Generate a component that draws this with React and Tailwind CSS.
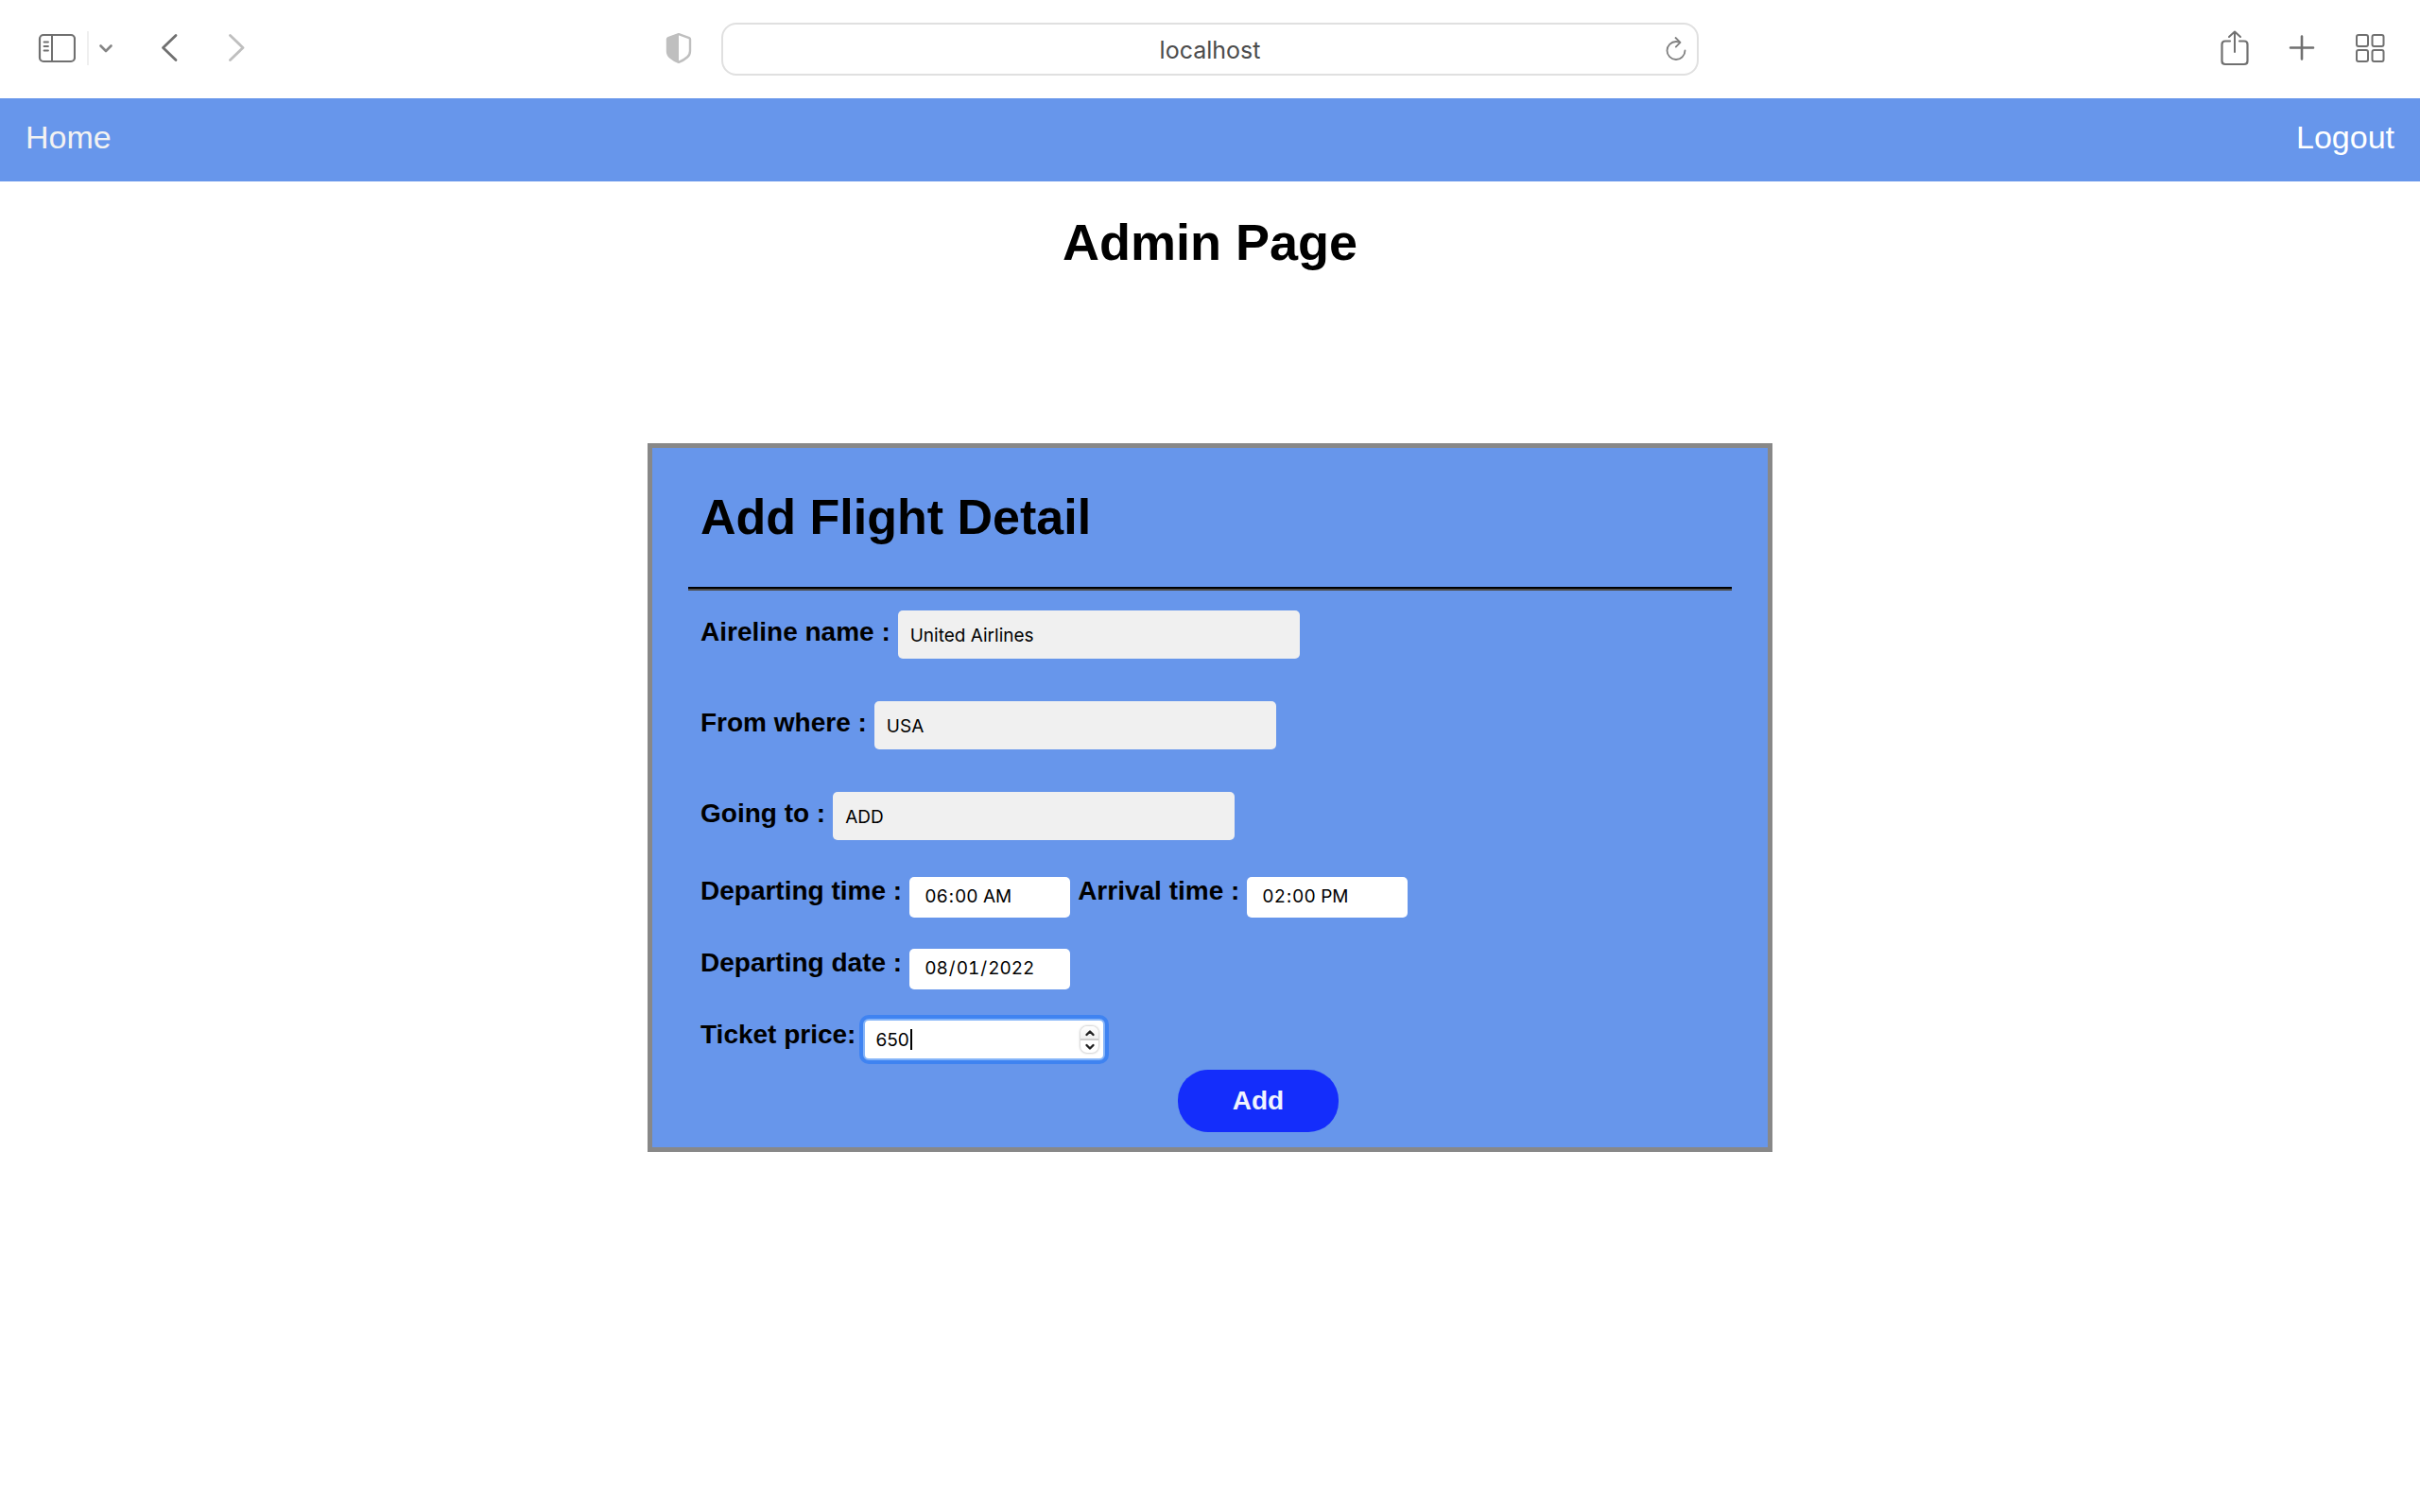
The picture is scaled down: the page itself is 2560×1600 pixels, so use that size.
import React from 'react';

function Toolbar() {
  return (
    <header className="grid h-[104px] grid-cols-[1fr_minmax(0,1034px)_1fr] items-center bg-white text-[#707070]">
      <div className="flex items-center pr-[31px] pb-0.5 pl-10">
        <button type="button" aria-label="Show sidebar">
          <svg className="block h-8 w-10" viewBox="0 0 40 32" fill="none" stroke="currentColor">
            <rect x="2" y="2" width="37" height="28" rx="4" strokeWidth="2.2" />
            <path d="M15 2V30" strokeWidth="2" />
            <path d="M6.5 9.5H11M6.5 14H11M6.5 18.500H11" strokeWidth="1.8" strokeLinecap="round" />
          </svg>
        </button>
        <div className="ml-3 h-9 w-0.5 bg-[#efefef]" />
        <button type="button" aria-label="Tab groups" className="ml-2.5 text-[#858585]">
          <svg className="block h-4 w-4" viewBox="0 0 16 16" fill="none" stroke="currentColor" strokeWidth="2.6" strokeLinecap="round" strokeLinejoin="round">
            <path d="M2.500 5.500L8 11L13.500 5.500" />
          </svg>
        </button>
        <button type="button" aria-label="Back" className="ml-[50px]">
          <svg className="block h-8 w-5" viewBox="0 0 20 32" fill="none" stroke="currentColor" strokeWidth="2.8" strokeLinecap="round" strokeLinejoin="round">
            <path d="M16 2.500L2.500 15.500L16 28.500" />
          </svg>
        </button>
        <button type="button" aria-label="Forward" className="ml-[50px] text-[#bfbfbf]">
          <svg className="block h-8 w-5" viewBox="0 0 20 32" fill="none" stroke="currentColor" strokeWidth="2.8" strokeLinecap="round" strokeLinejoin="round">
            <path d="M3.500 2.500L17 15.500L3.500 28.500" />
          </svg>
        </button>
        <button type="button" aria-label="Privacy report" className="ml-auto text-[#bfbfbf]">
          <svg className="block h-[34px] w-7" viewBox="0 0 28 34">
            <path d="M14 2.200L25 6.200Q26 6.600 26 7.500V20Q26 24 23 26.500Q19.500 29.600 14 31.900Q8.500 29.600 5 26.500Q2 24 2 20V7.500Q2 6.600 3 6.200Z" fill="none" stroke="currentColor" strokeWidth="2.400" strokeLinejoin="round" />
            <path d="M14 1.500L2 6V20Q2 24 5 26.500Q8.500 29.600 14 32Z" fill="currentColor" />
          </svg>
        </button>
      </div>
      <div className="relative h-14">
        <input
          aria-label="Address"
          defaultValue="localhost"
          className="h-14 w-full rounded-2xl border-2 border-[#e0e0e0] bg-white px-12 pt-0.5 text-center font-['Inter',sans-serif] text-[25px] text-[#4c4c4c] outline-none"
        />
        <button type="button" aria-label="Reload" className="absolute top-3.5 right-3 text-[#808080]">
          <svg className="block h-7 w-6" viewBox="0 0 24 28" fill="none" stroke="currentColor" strokeWidth="1.800" strokeLinecap="round" strokeLinejoin="round">
            <path d="M15.500 6.600Q13.500 6 12 6A9.500 9.500 0 1 0 21.500 15.500" />
            <path d="M11.500 2L16.500 6.800L11.800 11.600" />
          </svg>
        </button>
      </div>
      <div className="flex items-center justify-end pr-[37px] pb-0.5">
        <button type="button" aria-label="Share">
          <svg className="block h-10 w-8" viewBox="0 0 32 40" fill="none" stroke="currentColor" strokeWidth="2.200" strokeLinecap="round" strokeLinejoin="round">
            <path d="M10 12.500H5Q1.500 12.500 1.500 16V33.500Q1.500 37 5 37H25Q28.500 37 28.500 33.500V16Q28.500 12.500 25 12.500H20" />
            <path d="M15 24V3M9 8L15 2.500L21 8" strokeWidth="2" />
          </svg>
        </button>
        <button type="button" aria-label="New tab" className="ml-10">
          <svg className="block h-7 w-7" viewBox="0 0 28 28" stroke="currentColor" strokeWidth="2.600" strokeLinecap="round">
            <path d="M14 1.500V25.500M2 13.500H26" />
          </svg>
        </button>
        <button type="button" aria-label="Tab overview" className="ml-[42px]">
          <svg className="block h-8 w-8" viewBox="0 0 32 32" fill="none" stroke="currentColor" strokeWidth="2">
            <rect x="2" y="2" width="12" height="12" rx="2" />
            <rect x="18.500" y="2" width="12" height="12" rx="2" />
            <rect x="2" y="18" width="12" height="12" rx="2" />
            <rect x="18.500" y="18" width="12" height="12" rx="2" />
          </svg>
        </button>
      </div>
    </header>
  );
}

function TextRow({ id, label, value }) {
  return (
    <div className="flex items-start gap-2">
      <label htmlFor={id} className="pt-2 leading-[30px]">{label}</label>
      <input
        id={id}
        type="text"
        defaultValue={value}
        className="h-[51px] w-[425px] rounded-[5px] bg-[#f0f0f0] px-[13px] pt-0.5 font-['Inter',sans-serif] text-[19px] font-normal outline-none"
      />
    </div>
  );
}

function PickerField({ id, label, type, value }) {
  return (
    <div className="flex items-start gap-2">
      <label htmlFor={id} className="leading-[30px]">{label}</label>
      <input
        id={id}
        type={type}
        defaultValue={value}
        className="h-[43px] w-[170px] rounded-[5px] bg-white pl-[15px] font-['Inter',sans-serif] text-[19px] font-normal tabular-nums outline-none [&::-webkit-calendar-picker-indicator]:hidden"
      />
    </div>
  );
}

function PriceField() {
  return (
    <div className="flex items-start gap-2">
      <label htmlFor="price" className="pt-0.5 leading-[30px]">Ticket price:</label>
      <div className="relative">
        <input
          id="price"
          type="number"
          defaultValue="650"
          className="block h-11 w-64 rounded-md border-2 border-[#85b4f8] bg-white pl-[11px] font-['Inter',sans-serif] text-[19px] font-normal ring-4 ring-[#3f83f1] outline-none [appearance:textfield] [&::-webkit-inner-spin-button]:appearance-none"
        />
        <span className="absolute top-[11px] left-[50px] h-[22px] w-0.5 bg-black" />
        <div className="absolute top-2 right-[7px] flex h-7 w-[19px] flex-col overflow-hidden rounded-[7px] bg-white shadow-[0_0_2px_1px_#00000030]">
          <button type="button" aria-label="Increase price" className="flex flex-1 items-center justify-center border-b border-[#cfcfcf] bg-linear-to-b from-white to-[#f0f0f0]">
            <svg className="block h-2 w-3" viewBox="0 0 12 8" fill="none" stroke="#222" strokeWidth="2.400" strokeLinecap="round" strokeLinejoin="round">
              <path d="M2.500 6L6 2.500L9.500 6" />
            </svg>
          </button>
          <button type="button" aria-label="Decrease price" className="flex flex-1 items-center justify-center border-t border-[#cfcfcf]">
            <svg className="block h-2 w-3" viewBox="0 0 12 8" fill="none" stroke="#222" strokeWidth="2.400" strokeLinecap="round" strokeLinejoin="round">
              <path d="M2.500 2L6 5.500L9.500 2" />
            </svg>
          </button>
        </div>
      </div>
    </div>
  );
}

export default function App() {
  return (
    <div className="min-h-screen bg-white font-['Liberation_Sans',Arial,sans-serif] text-black">
      <Toolbar />
      <nav className="flex h-[88px] items-center justify-between bg-[#6796eb] px-[27px] pb-1.5 text-[34px]">
        <a href="#home" className="text-[#f2f2f2]">Home</a>
        <a href="#logout" className="text-white">Logout</a>
      </nav>
      <main>
        <h1 className="pt-[34px] text-center text-[54px] leading-[60px] font-bold">Admin Page</h1>
        <section className="mx-auto mt-[183px] w-[1190px] max-w-full border-5 border-[#888] bg-[#6796eb] px-[38px] pt-[43px] pb-4">
          <h2 className="px-[13px] text-[52px] leading-[60px] font-bold">Add Flight Detail</h2>
          <hr className="mt-11 border-t-2 border-b-2 border-t-black border-b-[#4c4c4c]" />
          <form className="px-[13px] pt-[21px] text-[28px] font-bold" onSubmit={(e) => e.preventDefault()}>
            <div className="flex flex-col gap-[45px]">
              <TextRow id="airline" label="Aireline name :" value="United Airlines" />
              <TextRow id="from" label="From where :" value="USA" />
              <TextRow id="to" label="Going to :" value="ADD" />
            </div>
            <div className="mt-[39px] flex flex-wrap gap-2">
              <PickerField id="depart-time" label="Departing time :" type="time" value="06:00" />
              <PickerField id="arrival-time" label="Arrival time :" type="time" value="14:00" />
            </div>
            <div className="mt-[33px]">
              <PickerField id="depart-date" label="Departing date :" type="date" value="2022-08-01" />
            </div>
            <div className="mt-[31px]">
              <PriceField />
            </div>
            <button type="submit" className="mt-2.5 ml-[505px] block h-[66px] w-[170px] rounded-[32px] bg-[#142dfb] text-[28px] font-bold text-[#f0f3fe]">
              Add
            </button>
          </form>
        </section>
      </main>
    </div>
  );
}
